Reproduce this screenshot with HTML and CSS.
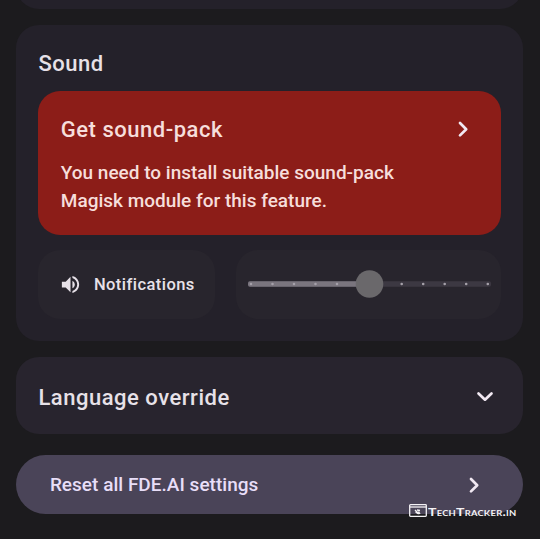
FILE: index.html
```html
<!DOCTYPE html>
<html lang="en">
<head>
<meta charset="utf-8">
<title>Settings</title>
<link rel="stylesheet" href="styles.css">
</head>
<body>
<main class="page">
  <section class="card card-previous"></section>
  <section class="card sound">
    <h2 class="title">Sound</h2>
    <div class="alert">
      <div class="alert-head">
        <span class="title">Get sound-pack</span>
        <svg class="chevron" viewBox="0 0 24 24"><path d="M9 6l6.200 6.200L9 18.400"/></svg>
      </div>
      <p class="alert-text">You need to install suitable sound-pack<br>Magisk module for this feature.</p>
    </div>
    <div class="controls">
      <div class="tile notifications">
        <svg class="speaker" viewBox="0 0 24 24"><path d="M3 9v6h4l5 5V4L7 9H3zm13.500 3c0-1.770-1.020-3.290-2.500-4.030v8.050c1.480-.73 2.500-2.250 2.500-4.020zM14 3.230v2.060c2.890.86 5 3.540 5 6.710s-2.110 5.850-5 6.710v2.060c4.010-.91 7-4.490 7-8.770s-2.990-7.860-7-8.770z"/></svg>
        <span>Notifications</span>
      </div>
      <div class="tile volume">
        <svg class="slider" viewBox="0 0 244 28">
          <rect class="track" x="0" y="11.200" width="243" height="5.600" rx="2"/>
          <rect class="filled" x="0" y="11.200" width="121" height="5.600" rx="2"/>
          <path class="ticks" d="M3 14h0M24.500 14h0M46 14h0M67.500 14h0M89 14h0M153.700 14h0M175.200 14h0M196.700 14h0M218.200 14h0M239.800 14h0"/>
          <circle class="thumb" cx="121.500" cy="14" r="13.800"/>
        </svg>
      </div>
    </div>
  </section>
  <section class="card language">
    <span class="title">Language override</span>
    <svg class="chevron" viewBox="0 0 24 24"><path d="M5.500 8.500l6.500 6.200L18.500 8.500"/></svg>
  </section>
  <section class="reset">
    <span>Reset all FDE.AI settings</span>
    <svg class="chevron" viewBox="0 0 24 24"><path d="M9 6l6.200 6.200L9 18.400"/></svg>
  </section>
  <div class="watermark">
    <svg class="browser" viewBox="0 0 18 13"><rect x=".7" y=".7" width="16.600" height="11.600" rx=".8"/><path d="M1 3h16"/><path d="M6 6l4 4M6.500 7.800l2.500 2M8 6l3 .5M9.500 7.500l1.500 2.500"/></svg>
    <span class="brand">TechTracker.in</span>
  </div>
</main>
</body>
</html>
```
FILE: styles.css
```css
* { box-sizing: border-box; }
body {
  margin: 0;
  background: #1c1b1e;
  color: #e7e1e8;
  font-family: Roboto, "Liberation Sans", sans-serif;
  font-weight: 500;
}
.page {
  position: relative;
  display: flow-root;
  height: 539px;
  padding: 0 16.600px 0 16.400px;
  overflow: hidden;
}
.card { background: #24212a; border-radius: 23px; }
.card-previous { height: 60px; margin-top: -51px; }
.sound { height: 316px; margin-top: 16px; padding: 25px 22px 0; }
.title {
  margin: 0;
  font-size: 22px;
  line-height: 28px;
  font-weight: 500;
  letter-spacing: .52px;
}
.alert {
  height: 143.600px;
  margin-top: 13px;
  padding: 24.500px 22.400px 0;
  border-radius: 22px;
  background: #8c1d18;
  color: #f6dedb;
}
.alert-head { display: flex; align-items: center; justify-content: space-between; height: 28px; }
.alert-text { margin: 15.500px 0 0; font-size: 19px; line-height: 27.500px; }
.chevron {
  width: 24px;
  height: 24px;
  flex: none;
  fill: none;
  stroke: #f1e8f2;
  stroke-width: 2.700;
  stroke-linecap: round;
  stroke-linejoin: round;
}
.alert .chevron { margin: -2px 4px 0 0; }
.controls { display: flex; gap: 21px; margin-top: 15.400px; }
.tile { display: flex; align-items: center; height: 69px; border-radius: 22px; background: #28252d; }
.notifications { width: 177px; padding-left: 20.500px; gap: 12px; font-size: 16.500px; letter-spacing: .45px; }
.speaker { width: 23px; height: 23px; fill: #e7e1e8; }
.volume { flex: 1; padding-left: 12px; }
.slider { width: 244px; height: 28px; margin-top: -1px; }
.track { fill: #3c3842; }
.filled { fill: #7a757e; }
.ticks { fill: none; stroke: #a5a0a9; stroke-width: 2.600; stroke-linecap: round; }
.thumb { fill: #6a686b; }
.language {
  display: flex;
  align-items: center;
  justify-content: space-between;
  height: 77px;
  margin-top: 16.400px;
  padding: 4.500px 26.500px 0 22px;
  background: #28242e;
}
.language .chevron { margin-top: -2px; }
.reset {
  display: flex;
  align-items: center;
  justify-content: space-between;
  height: 59px;
  margin-top: 20.200px;
  padding: 1px 37.500px 0 33.500px;
  border-radius: 30px;
  background: #4a4458;
  color: #e8def8;
  font-size: 19px;
  letter-spacing: .02px;
}
.watermark {
  position: absolute;
  left: 409px;
  top: 504px;
  display: flex;
  align-items: center;
  gap: 1px;
  height: 14px;
  color: #f4f2f5;
  font: 700 12px/14px Lato, sans-serif;
  font-variant: small-caps;
  letter-spacing: .2px;
  white-space: nowrap;
}
.brand { margin-top: 1px; transform: scaleX(1.17); transform-origin: left center; }
.browser { width: 18px; height: 13px; margin-top: -1px; fill: none; stroke: #f4f2f5; stroke-width: 1.300; }
```
